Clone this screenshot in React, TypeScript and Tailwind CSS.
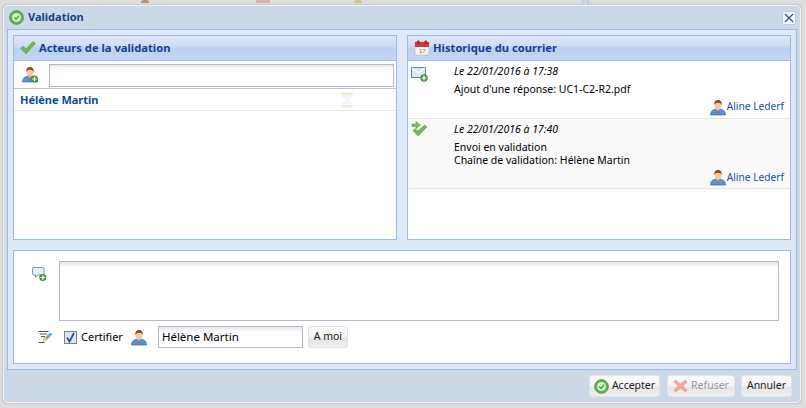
import React from "react";

// user bust, used with or without the green plus badge
const Person = ({ plus = false, className = "" }: { plus?: boolean; className?: string }) => (
  <svg width="16" height="17" viewBox="0 0 16 17" className={className}>
    <path d="M0.500 16c0-4 2.500-6 7.500-6s7.500 2 7.500 6z" fill="#5b93d0" stroke="#3a6aa8" strokeWidth="0.7" />
    <path d="M6.500 10l1.500 4 1.500-4z" fill="#e8eef6" />
    <path d="M7.500 10.500h1l.3 3-.8 1-.8-1z" fill="#c0504d" />
    <ellipse cx="8" cy="6" rx="3.500" ry="4" fill="#f3c9a0" />
    <path d="M4.300 6C3.800 2.500 6 1 8 1s4.300 1.500 3.700 5C11 4.500 10 3.800 8 3.800S5 4.500 4.300 6z" fill="#8a4a22" />
    {plus && <PlusBadge cx={12.500} cy={13} r={3.200} />}
  </svg>
);

const PlusBadge = ({ cx, cy, r }: { cx: number; cy: number; r: number }) => (
  <g>
    <circle cx={cx} cy={cy} r={r} fill="#4f9a3c" stroke="#2f7a2a" strokeWidth="0.6" />
    <path d={`M${cx - r + 1} ${cy}h${2 * r - 2}M${cx} ${cy - r + 1}v${2 * r - 2}`} stroke="#fff" strokeWidth="1.200" />
  </g>
);

const RoundCheck = ({ size = 16 }: { size?: number }) => (
  <svg width={size} height={size} viewBox="0 0 16 16">
    <circle cx="8" cy="8" r="7.300" fill="#5cb349" stroke="#3d8f35" strokeWidth="0.9" />
    <circle cx="8" cy="8" r="4.800" fill="#e4f3de" stroke="#8ccb78" strokeWidth="0.6" />
    <path d="M5.500 8l2 2 3.200-3.800" fill="none" stroke="#4aa33a" strokeWidth="1.600" />
  </svg>
);

const BigCheck = () => (
  <svg width="16" height="14" viewBox="0 0 16 14">
    <path d="M0.500 7.500L3 5l3 3 7-7.500 2.500 2L6 13z" fill="#6fb45c" stroke="#5a9c4a" strokeWidth="0.5" />
  </svg>
);

const Calendar = () => (
  <svg width="16" height="16" viewBox="0 0 16 16">
    <rect x="1" y="2" width="14" height="13" fill="#f6f4ee" stroke="#b8b4aa" strokeWidth="0.6" />
    <rect x="1" y="2" width="14" height="5" fill="#d8343a" />
    <rect x="3" y="0.500" width="2.500" height="3.500" rx="1" fill="#a8202a" />
    <rect x="10.500" y="0.500" width="2.500" height="3.500" rx="1" fill="#a8202a" />
    <text x="5" y="13" fontSize="6" fill="#777" fontFamily="Liberation Sans, sans-serif">17</text>
  </svg>
);

const MailPlus = () => (
  <svg width="17" height="15" viewBox="0 0 17 15">
    <rect x="0.500" y="0.500" width="14" height="10" fill="#d8e6f6" stroke="#5d8ac0" />
    <path d="M1 1l6.500 5L14 1" fill="none" stroke="#fff" strokeWidth="1.200" />
    <PlusBadge cx={13} cy={11} r={3.400} />
  </svg>
);

const ArrowCheck = () => (
  <svg width="17" height="16" viewBox="0 0 17 16">
    <path d="M1 3h4V0.500L9.500 4 5 7.500V5.500H1z" fill="#7cc05c" stroke="#4f9238" strokeWidth="0.5" />
    <path d="M2 9.500L4 7.500l3 2.500 6.500-6 2.500 2L7 15z" fill="#74b45c" stroke="#5a9c4a" strokeWidth="0.5" />
  </svg>
);

const Hourglass = () => (
  <svg width="14" height="16" viewBox="0 0 14 16">
    <path d="M3 2c0 5 3 4.500 3 6s-3 1-3 6h8c0-5-3-4.500-3-6s3-1 3-6z" fill="#f2f7fc" stroke="#e6e6e6" strokeWidth="0.6" />
    <rect x="1" y="0.500" width="12" height="2" rx="1" fill="#f5e4d0" />
    <rect x="1" y="13.500" width="12" height="2" rx="1" fill="#f5e4d0" />
  </svg>
);

const CommentPlus = () => (
  <svg width="15" height="15" viewBox="0 0 15 15">
    <path d="M2 0.500h8.500a1.500 1.500 0 0 1 1.500 1.500v4.500a1.500 1.500 0 0 1-1.500 1.500H5.500L3.500 10.500V8H2A1.500 1.500 0 0 1 0.500 6.500V2A1.500 1.500 0 0 1 2 0.500z" fill="#e6f0fb" stroke="#6f9ac8" />
    <PlusBadge cx={10.800} cy={10.500} r={3.200} />
  </svg>
);

const SignPen = () => (
  <svg width="15" height="14" viewBox="0 0 15 14">
    <path d="M0.500 1.500h10M2 4h7M3 6.500h4M0.500 12.500h6" stroke="#444" strokeWidth="0.9" />
    <path d="M5 8l2-1 2.500 2-2 2.500H5z" fill="#f2c94c" />
    <path d="M7 7.500L12 2.500l2.500 1.500L9.500 9.500z" fill="#6ea6e0" />
  </svg>
);

const CrossRed = () => (
  <svg width="15" height="14" viewBox="0 0 15 14">
    <path d="M2.500 0.500L7.500 4.500 12.500 0.500 14.500 3 10.500 7 14.500 11 12.500 13.500 7.500 9.500 2.500 13.500 0.500 11 4.500 7 0.500 3z" fill="#f0a6a0" />
  </svg>
);

const PanelHeader = ({ icon, title }: { icon: React.ReactNode; title: string }) => (
  <div className="flex h-[25px] shrink-0 items-center gap-[3px] border-b border-[#99bbe8] bg-[linear-gradient(#dbe7f8_0%,#cddef5_40%,#b9d0f0_55%,#c4d7f3_100%)] pl-[6px]">
    <span className="flex w-[16px] justify-center">{icon}</span>
    <span className="text-[11.2px] font-bold text-[#15428b]">{title}</span>
  </div>
);

const Author = ({ className = "" }: { className?: string }) => (
  <div className={`flex items-center justify-end gap-[1px] pr-[6px] text-[10.2px] text-[#1a4ea6] ${className}`}>
    <Person />
    <span>Aline Lederf</span>
  </div>
);

const inputCls =
  "border border-[#b5b8c8] bg-[linear-gradient(#e6e6e6_0px,#ffffff_5px)]";

const btnCls =
  "flex h-[22px] items-center justify-center rounded-[3px] border border-[#dde3ea] bg-[linear-gradient(#fafafa_0%,#f4f4f4_50%,#e6e6e6_55%,#eeeeee_100%)] text-[#222]";

export default function App() {
  return (
    <div className="h-[408px] w-[806px] overflow-hidden bg-[#dedede] font-['Noto_Sans',sans-serif] text-[10.5px] text-black">
      {/* bits of the page behind the dialog */}
      <div className="flex h-[5px] pl-[141px]">
        <span className="h-[3px] w-[8px] rounded-t bg-[#b09078]" />
        <span className="ml-[107px] h-[3px] w-[14px] bg-[#d8b0b0]" />
        <span className="ml-[84px] h-[3px] w-[8px] rounded-t bg-[#d8c090]" />
        <span className="ml-[220px] h-[5px] w-[7px] border-x border-[#b8c8dc] bg-[#cdd8e6]" />
      </div>
      <div className="ml-[3px] flex h-[398px] w-[798px] flex-col rounded-[4px] border border-[#eef2f8] bg-[#cdd8e6] px-[3px] shadow-[0_0_2px_#999]">
        <div className="flex h-[23px] items-center justify-between pl-[2px] pr-[1px]">
          <div className="flex items-center gap-[4px]">
            <RoundCheck size={15} />
            <span className="text-[11px] font-bold text-[#15428b]">Validation</span>
          </div>
          <button className="flex h-[14px] w-[14px] items-center justify-center rounded-[2px] border border-[#b8cdea] bg-[#f2f6fc]">
            <svg width="10" height="10" viewBox="0 0 10 10">
              <path d="M1 1l8 8M9 1l-8 8" stroke="#2f4f9a" strokeWidth="1.200" />
            </svg>
          </button>
        </div>

        <div className="flex h-[341px] flex-col gap-[10px] border border-[#99bbe8] bg-[#dfe8f6] p-[5px]">
          <div className="flex h-[205px] shrink-0 gap-[10px]">
            <div className="flex w-[384px] flex-col border border-[#99bbe8] bg-white">
              <PanelHeader icon={<BigCheck />} title="Acteurs de la validation" />
              <div className="flex h-[28px] items-start border-b border-[#c0c2cc] pl-[8px] pr-[2px] pt-[3px]">
                <Person plus className="mt-[2px]" />
                <div className={`ml-[11px] h-[23px] flex-1 ${inputCls}`} />
              </div>
              <div className="flex h-[22px] items-center justify-between border-b border-[#e8e8e8] pl-[6px] pr-[42px] pt-[1px]">
                <span className="text-[11px] font-bold text-[#0f4c96]">Hélène Martin</span>
                <Hourglass />
              </div>
            </div>

            <div className="flex w-[384px] flex-col border border-[#99bbe8] bg-white">
              <PanelHeader icon={<Calendar />} title="Historique du courrier" />
              <div className="relative h-[58px] border-b border-[#e8e8e8] pl-[46px] pt-[3px]">
                <span className="absolute left-[3px] top-[6px]"><MailPlus /></span>
                <p className="italic">Le 22/01/2016 à 17:38</p>
                <p className="mt-[2px]">Ajout d'une réponse: UC1-C2-R2.pdf</p>
                <Author className="mt-[1px]" />
              </div>
              <div className="relative h-[70px] border-b border-[#e5e5e5] bg-[#f9f9f9] pl-[46px] pt-[3px]">
                <span className="absolute left-[3px] top-[2px]"><ArrowCheck /></span>
                <p className="italic">Le 22/01/2016 à 17:40</p>
                <p className="mt-[3px] leading-[13px]">Envoi en validation</p>
                <p className="leading-[13px]">Chaîne de validation: Hélène Martin</p>
                <Author className="mt-[2px]" />
              </div>
            </div>
          </div>

          <div className="flex h-[114px] flex-col gap-[5px] border border-[#99bbe8] bg-white px-[11px] pt-[10px]">
            <div className="flex">
              <span className="ml-[7px] mt-[6px] flex w-[27px]"><CommentPlus /></span>
              <div className={`h-[60px] w-[721px] ${inputCls}`} />
            </div>
            <div className="flex h-[22px] items-center">
              <span className="ml-[13px] flex w-[26px]"><SignPen /></span>
              <span className="flex h-[13px] w-[13px] items-center justify-center border border-[#808080] bg-[#dfe5f2]">
                <svg width="11" height="11" viewBox="0 0 11 11">
                  <path d="M2 5.500l2.500 4L9 1" fill="none" stroke="#2f4f9a" strokeWidth="1.800" />
                </svg>
              </span>
              <span className="ml-[4px] text-[11px]">Certifier</span>
              <Person className="ml-[8px]" />
              <div className={`ml-[11px] flex h-[22px] w-[145px] items-center pl-[3px] text-[11.5px] ${inputCls}`}>Hélène Martin</div>
              <button className={`${btnCls} ml-[5px] w-[40px]`}>A moi</button>
            </div>
          </div>
        </div>

        <div className="flex flex-1 items-start justify-end pr-[5px] pt-[5px]">
          <button className={`${btnCls} w-[71px] gap-[3px]`}><RoundCheck size={15} />Accepter</button>
          <button className={`${btnCls} ml-[7px] w-[68px] gap-[3px] text-[#999]`}><CrossRed />Refuser</button>
          <button className={`${btnCls} ml-[6px] w-[51px]`}>Annuler</button>
        </div>
      </div>
    </div>
  );
}
